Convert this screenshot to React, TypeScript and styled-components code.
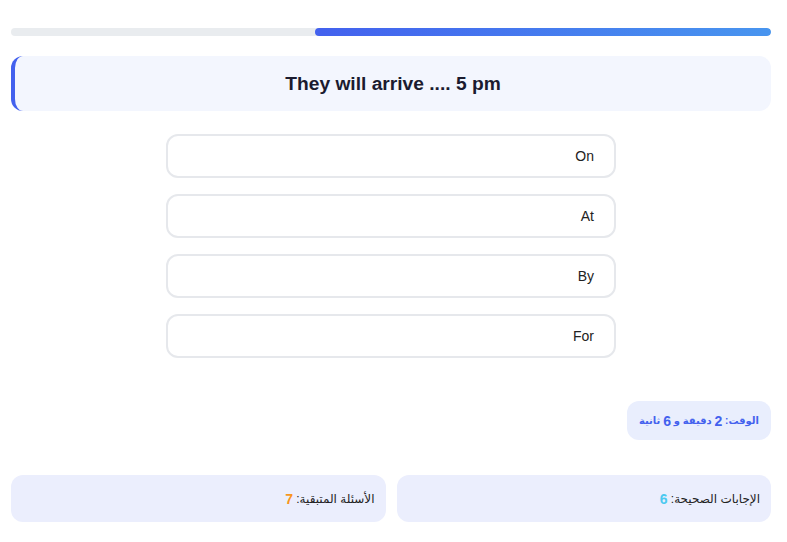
import React from "react";
import styled, { createGlobalStyle } from "styled-components";

const Global = createGlobalStyle`
  html, body { margin: 0; padding: 0; background: #ffffff; }
  body { font-family: "Liberation Sans", Arial, "DejaVu Sans", sans-serif; }
`;

const Page = styled.div`
  direction: rtl;
  padding: 28px 16px 20px 11px;
  display: flex;
  flex-direction: column;
`;

const Track = styled.div`
  height: 8px;
  background: #e9ecef;
  border-radius: 4px;
  overflow: hidden;
  display: flex;
`;

const Fill = styled.div`
  height: 100%;
  border-radius: 4px;
  background: linear-gradient(to right, #4361ee, #4895ef);
`;

const Question = styled.div`
  margin-top: 20px;
  height: 55px;
  box-sizing: border-box;
  background: #f3f6fe;
  border-left: 4px solid #4361ee;
  border-radius: 12px;
  display: flex;
  align-items: center;
  justify-content: center;
  font-size: 19.2px;
  font-weight: 700;
  color: #1b1b2f;
  direction: ltr;
`;

const Options = styled.div`
  margin-top: 23px;
  display: flex;
  flex-direction: column;
  align-items: center;
  gap: 16px;
`;

const Option = styled.button`
  width: 450px;
  height: 44px;
  box-sizing: border-box;
  border: 2px solid #e6e8ec;
  border-radius: 12px;
  background: #ffffff;
  font-family: inherit;
  font-size: 14px;
  color: #222;
  text-align: right;
  padding: 0 20px;
  direction: rtl;
`;

const TimerRow = styled.div`
  margin-top: 43px;
  display: flex;
  justify-content: flex-start;
`;

const Timer = styled.div`
  background: #e9eefd;
  border-radius: 12px;
  height: 39px;
  box-sizing: border-box;
  padding: 0 12px;
  display: flex;
  align-items: center;
  font-size: 10px;
  font-weight: 700;
  color: #4361ee;
`;

const Num = styled.span<{ $color: string }>`
  color: ${(p) => p.$color};
  font-weight: 700;
  font-size: 14px;
`;

const Stats = styled.div`
  margin-top: 35px;
  display: grid;
  grid-template-columns: 1fr 1fr;
  gap: 11px;
`;

const Stat = styled.div`
  background: #ebeefd;
  border-radius: 12px;
  height: 47px;
  box-sizing: border-box;
  padding: 0 11px;
  display: flex;
  align-items: center;
  font-size: 12px;
  color: #222;
`;

export default function App() {
  const options = ["On", "At", "By", "For"];
  return (
    <>
      <Global />
      <Page>
        <Track>
          <Fill style={{ width: "60%" }} />
        </Track>
        <Question>They will arrive .... 5 pm</Question>
        <Options>
          {options.map((o) => (
            <Option key={o}>{o}</Option>
          ))}
        </Options>
        <TimerRow>
          <Timer>
            الوقت:&nbsp;<Num $color="#4361ee">2</Num>&nbsp;دقيقة و&nbsp;
            <Num $color="#4361ee">6</Num>&nbsp;ثانية
          </Timer>
        </TimerRow>
        <Stats>
          <Stat>
            الإجابات الصحيحة:&nbsp;<Num $color="#4cc9f0">6</Num>
          </Stat>
          <Stat>
            الأسئلة المتبقية:&nbsp;<Num $color="#f8961e">7</Num>
          </Stat>
        </Stats>
      </Page>
    </>
  );
}
